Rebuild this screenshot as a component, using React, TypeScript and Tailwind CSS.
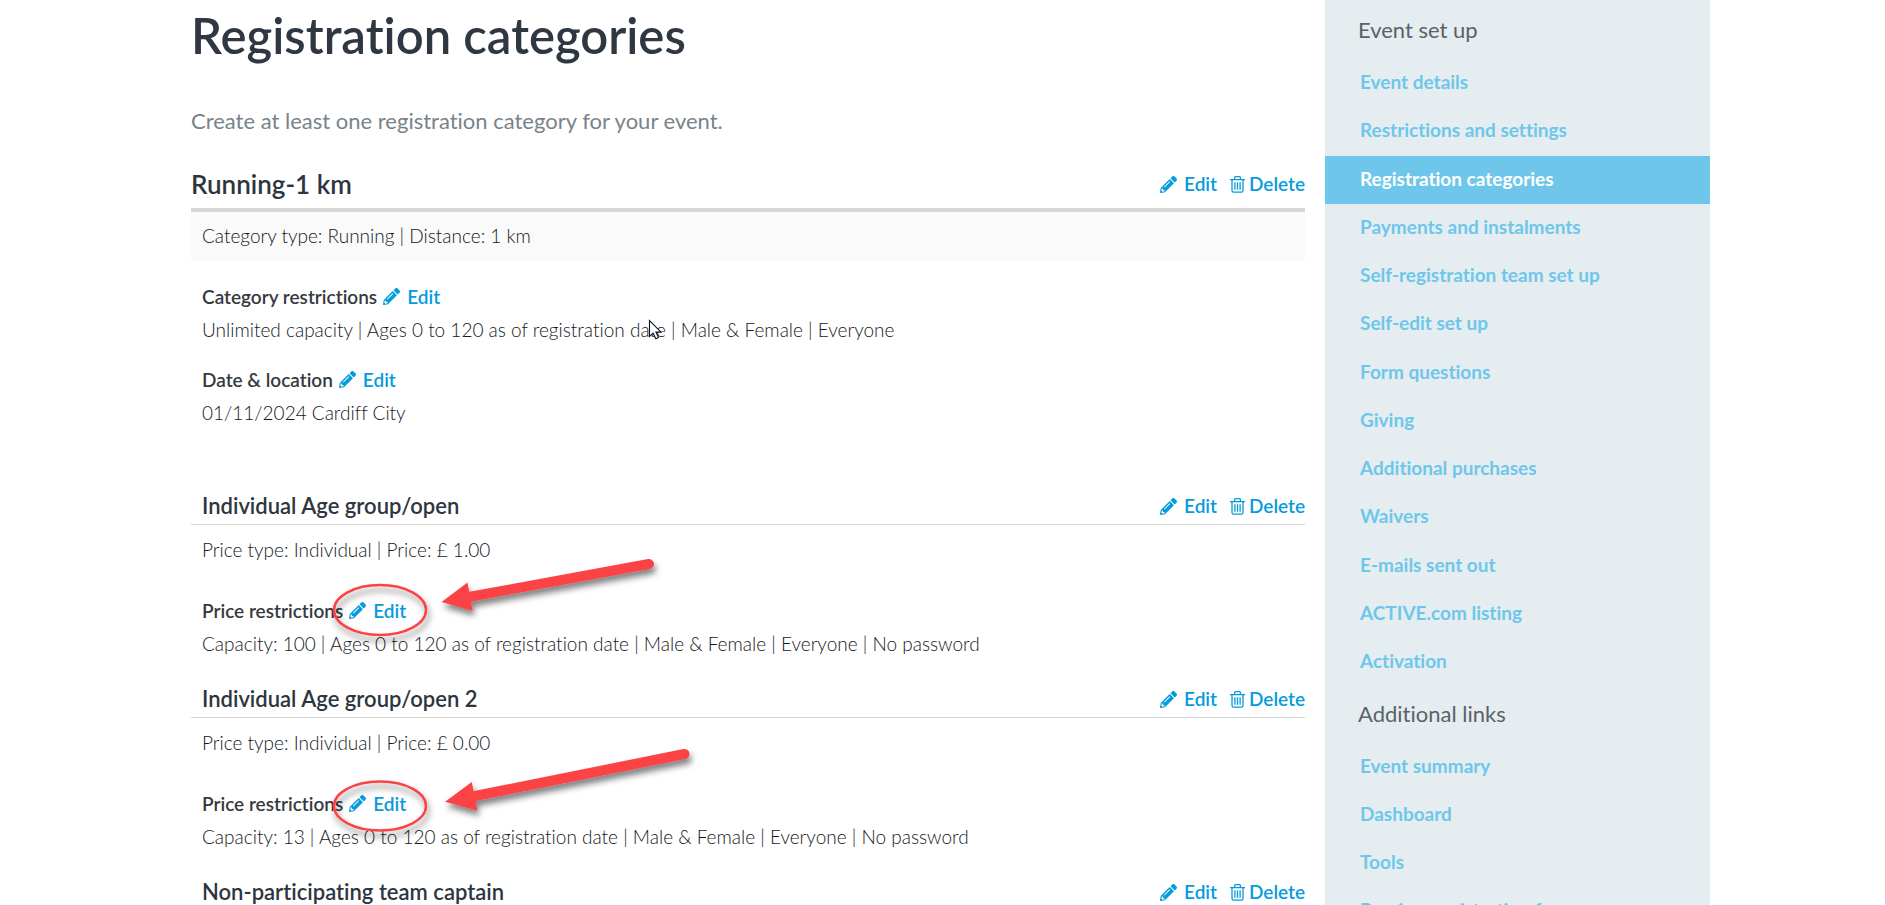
import type { ReactNode } from 'react';
import { FaPencilAlt } from 'react-icons/fa';

const setupLinks = [
  'Event details',
  'Restrictions and settings',
  'Registration categories',
  'Payments and instalments',
  'Self-registration team set up',
  'Self-edit set up',
  'Form questions',
  'Giving',
  'Additional purchases',
  'Waivers',
  'E-mails sent out',
  'ACTIVE.com listing',
  'Activation',
];

const additionalLinks = ['Event summary', 'Dashboard', 'Tools', 'Preview registration form'];

function TrashIcon() {
  return (
    <svg width="15" height="17" viewBox="0 0 15 17" fill="none" stroke="currentColor" strokeWidth="1.3" aria-hidden="true">
      <path d="M0 3.6h15M4.6 3.4V1.6q0-.9.9-.9h4q.9 0 .9.9v1.8M2 3.8v10.8q0 1.6 1.6 1.6h7.8q1.6 0 1.6-1.6V3.8" />
      <path d="M4.9 6.3v7.4M7.5 6.3v7.4M10.1 6.3v7.4" />
    </svg>
  );
}

function EditLink() {
  return (
    <a href="#edit" className="inline-flex items-center gap-[7px] font-semibold text-[#069bdc]">
      <FaPencilAlt className="size-[17px]" aria-hidden="true" />
      Edit
    </a>
  );
}

function Actions() {
  return (
    <div className="flex items-center gap-[13px] text-[19px] leading-8">
      <EditLink />
      <a href="#delete" className="inline-flex items-center gap-1 font-semibold text-[#069bdc]">
        <TrashIcon />
        Delete
      </a>
    </div>
  );
}

function Detail({ label, children }: { label: string; children: ReactNode }) {
  return (
    <div className="px-[11px] text-[19px] leading-[33px]">
      <div className="flex items-center gap-1.5">
        <h4 className="font-semibold text-[#363a3f]">{label}</h4>
        <EditLink />
      </div>
      <p className="font-light text-[#14181c]">{children}</p>
    </div>
  );
}

function PriceHeading({ children }: { children: ReactNode }) {
  return (
    <header className="flex items-center justify-between border-b border-[#d6d6d6] pb-0.5 pl-[11px]">
      <h3 className="text-[22px] leading-8 font-semibold text-[#2d3640]">{children}</h3>
      <Actions />
    </header>
  );
}

function PriceSection({ title, type, restrictions }: { title: string; type: string; restrictions: string }) {
  return (
    <section className="mb-[23px]">
      <PriceHeading>{title}</PriceHeading>
      <p className="mt-2 mb-7 px-[11px] text-[19px] leading-[33px] font-light text-[#14181c]">{type}</p>
      <Detail label="Price restrictions">{restrictions}</Detail>
    </section>
  );
}

function NavLinks({ items, active, className }: { items: string[]; active?: string; className: string }) {
  return (
    <ul className={className}>
      {items.map((item) => (
        <li key={item}>
          <a
            href="#nav"
            aria-current={item === active ? 'page' : undefined}
            className={
              item === active
                ? 'block bg-[#6ec7eb] pb-0.5 pl-[35px] text-[19px] leading-[46px] font-bold text-white'
                : 'block pb-0.5 pl-[35px] text-[19px] leading-[46px] font-bold text-[#6ec7eb]'
            }
          >
            {item}
          </a>
        </li>
      ))}
    </ul>
  );
}

function Annotations() {
  return (
    <svg className="pointer-events-none absolute top-0 left-0" width="1000" height="905" viewBox="0 0 1000 905" aria-hidden="true">
      <defs>
        <filter id="shadow" x="-20%" y="-20%" width="140%" height="150%">
          <feDropShadow dx="2" dy="5" stdDeviation="3" floodColor="#000" floodOpacity="0.5" />
        </filter>
      </defs>
      <g filter="url(#shadow)" fill="none" stroke="#fb4345" strokeWidth="2.5">
        <ellipse cx="380" cy="610" rx="46" ry="25" />
        <ellipse cx="380" cy="806" rx="46" ry="24.5" />
      </g>
      <g filter="url(#shadow)" fill="#fb4345" stroke="#fb4345">
        <path d="M649 564L466 597.5" strokeWidth="10" strokeLinecap="round" />
        <path d="M441.5 602L467.5 582.5L472.8 611Z" stroke="none" />
        <path d="M684.5 754L470 797" strokeWidth="10" strokeLinecap="round" />
        <path d="M445 801.7L471.8 782L477.5 810.7Z" stroke="none" />
      </g>
      <path d="M649.5 320.5v16l3.7-3.3 2.6 5.6 2.7-1.2-2.6-5.5h5.1z" fill="#fff" stroke="#10131f" strokeWidth="1.1" />
    </svg>
  );
}

export default function App() {
  return (
    <div className="relative h-screen overflow-hidden bg-white font-['Lato',sans-serif] [font-variant-ligatures:none]">
      <div className="flex min-h-full items-stretch gap-5 pr-[175px] pl-[191px]">
        <main className="min-w-0 flex-1">
          <h1 className="text-[49px] leading-[70px] font-semibold text-[#2f3742]">Registration categories</h1>
          <p className="mt-[35px] text-[22px] leading-8 text-[#78838a]">Create at least one registration category for your event.</p>

          <section className="mt-[27px]">
            <header className="flex items-center justify-between border-b-4 border-[#d6d6d6] pb-1">
              <h2 className="text-[26px] leading-10 font-semibold text-[#2d3640]">Running-1 km</h2>
              <Actions />
            </header>
            <p className="bg-[#fafafa] px-[11px] pt-2.5 pb-[11px] text-[19px] leading-7 font-light text-[#14181c]">
              Category type: Running | Distance: 1 km
            </p>
            <div className="mt-[19px] mb-[61px] flex flex-col gap-[17px]">
              <Detail label="Category restrictions">
                Unlimited capacity | Ages 0 to 120 as of registration date | Male &amp; Female | Everyone
              </Detail>
              <Detail label="Date & location">01/11/2024 Cardiff City</Detail>
            </div>
          </section>

          <PriceSection
            title="Individual Age group/open"
            type="Price type: Individual | Price: £ 1.00"
            restrictions="Capacity: 100 | Ages 0 to 120 as of registration date | Male & Female | Everyone | No password"
          />
          <PriceSection
            title="Individual Age group/open 2"
            type="Price type: Individual | Price: £ 0.00"
            restrictions="Capacity: 13 | Ages 0 to 120 as of registration date | Male & Female | Everyone | No password"
          />
          <PriceHeading>Non-participating team captain</PriceHeading>
        </main>

        <aside className="w-[385px] shrink-0 bg-[#e5edf0]">
          <nav aria-label="Event">
            <h2 className="pt-3.5 pl-[33px] text-[22px] leading-8 text-[#5a626a]">Event set up</h2>
            <NavLinks
              items={setupLinks}
              active="Registration categories"
              className="mt-[13px] flex h-[627px] flex-col justify-between"
            />
            <h2 className="mt-3 pl-[33px] text-[22px] leading-8 text-[#5a626a]">Additional links</h2>
            <NavLinks items={additionalLinks} className="mt-[13px] flex flex-col" />
          </nav>
        </aside>
      </div>
      <Annotations />
    </div>
  );
}
